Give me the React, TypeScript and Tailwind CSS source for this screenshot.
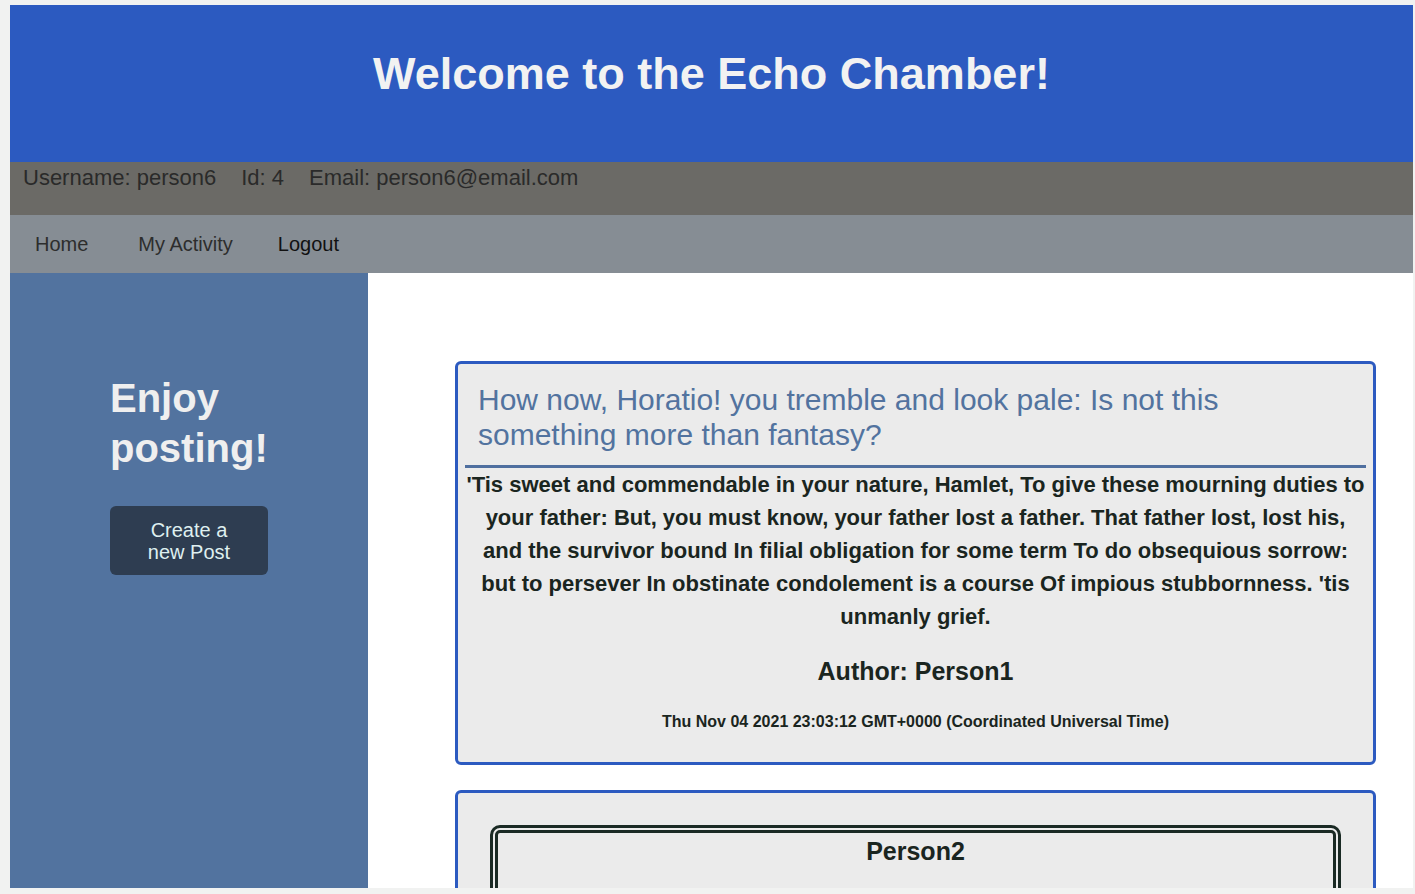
import React from "react";

export default function App() {
  return (
    <div className="w-[1415px] h-[894px] bg-[#f1f2f1] pt-[5px] pl-[10px] overflow-hidden" style={{ fontFamily: '"Liberation Sans", Arial, sans-serif' }}>
      <div className="w-[1403px] h-[883px] bg-white overflow-hidden flex flex-col">
        <header className="h-[157px] bg-[#2c5ac0] flex justify-center pt-[43px] shrink-0">
          <h1 className="text-[45px] leading-[52px] font-bold text-[#f2f2f2]">Welcome to the Echo Chamber!</h1>
        </header>
        <div className="h-[53px] bg-[#6b6a66] flex items-start pl-[13px] pt-[3px] text-[22px] leading-[26px] text-[#2a2a2a] gap-[25px] shrink-0">
          <span>Username: person6</span>
          <span>Id: 4</span>
          <span>Email: person6@email.com</span>
        </div>
        <nav className="h-[58px] bg-[#868d94] flex items-center pl-[25px] text-[20px] leading-[26px] shrink-0">
          <span className="text-[#2d2d2d] mr-[50px]">Home</span>
          <span className="text-[#2d2d2d] mr-[45px]">My Activity</span>
          <span className="text-[#111]">Logout</span>
        </nav>
        <div className="flex flex-1 min-h-0">
          <aside className="w-[358px] bg-[#52739f] pl-[100px] pt-[100px] shrink-0">
            <h2 className="text-[40px] leading-[50px] font-bold text-[#efefef]">Enjoy<br />posting!</h2>
            <button className="mt-[33px] w-[158px] h-[69px] bg-[#2e3d51] rounded-[6px] text-[20px] leading-[22px] text-[#dff0f0]">Create a<br />new Post</button>
          </aside>
          <main className="flex-1 pl-[87px] pt-[88px]">
            <div className="w-[921px] border-[3px] border-[#2c5ac0] rounded-[6px] bg-[#ebebeb] pb-[31px]">
              <div className="px-[20px] pt-[18px] text-[30px] leading-[35px] text-[#52739f]">
                How now, Horatio! you tremble and look pale: Is not this something more than fantasy?
              </div>
              <div className="mx-[7px] mt-[13px] h-[3px] bg-[#4f6f9f]"></div>
              <p className="text-[22px] leading-[33px] font-bold text-center text-[#1a2520] px-[7px]">
                'Tis sweet and commendable in your nature, Hamlet, To give these mourning duties to your father: But, you must know, your father lost a father. That father lost, lost his, and the survivor bound In filial obligation for some term To do obsequious sorrow: but to persever In obstinate condolement is a course Of impious stubbornness. 'tis unmanly grief.
              </p>
              <p className="mt-[23px] text-[25px] leading-[30px] font-bold text-center text-[#1a2520]">Author: Person1</p>
              <p className="mt-[27px] text-[16px] leading-[18px] font-bold text-center text-[#1a2520]">Thu Nov 04 2021 23:03:12 GMT+0000 (Coordinated Universal Time)</p>
            </div>
            <div className="mt-[25px] w-[921px] h-[200px] border-[3px] border-[#2c5ac0] rounded-[6px] bg-[#ebebeb] pt-[32px] px-[32px]">
              <div className="border-[8px] border-double border-[#1a2a24] rounded-[10px] h-[200px] pt-[3px]">
                <p className="text-[25px] leading-[30px] font-bold text-center text-[#1a2520]">Person2</p>
              </div>
            </div>
          </main>
        </div>
      </div>
    </div>
  );
}
